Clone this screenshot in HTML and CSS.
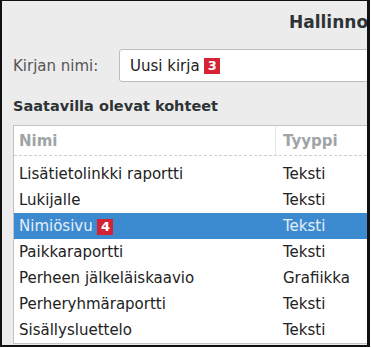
FILE: index.html
```html
<!DOCTYPE html>
<html lang="fi">
<head>
    <meta charset="UTF-8">
    <title>Kirja</title>
    <link rel="stylesheet" href="styles.css">
</head>
<body>
    <div class="frame">
        <div class="dialog">
            <div class="title">Hallinnoi kirjoja</div>
            <div class="name-row">
                <span class="label">Kirjan nimi:</span>
                <div class="entry">Uusi kirja <span class="badge">3</span></div>
            </div>
            <div class="section">Saatavilla olevat kohteet</div>
            <div class="list">
                <div class="list-head">
                    <div class="col-name">Nimi</div>
                    <div class="col-type">Tyyppi</div>
                </div>
                <div class="rows">
                    <div class="row"><div class="col-name">Lisätietolinkki raportti</div><div class="col-type">Teksti</div></div>
                    <div class="row"><div class="col-name">Lukijalle</div><div class="col-type">Teksti</div></div>
                    <div class="row selected"><div class="col-name">Nimiösivu <span class="badge">4</span></div><div class="col-type">Teksti</div></div>
                    <div class="row"><div class="col-name">Paikkaraportti</div><div class="col-type">Teksti</div></div>
                    <div class="row"><div class="col-name">Perheen jälkeläiskaavio</div><div class="col-type">Grafiikka</div></div>
                    <div class="row"><div class="col-name">Perheryhmäraportti</div><div class="col-type">Teksti</div></div>
                    <div class="row"><div class="col-name">Sisällysluettelo</div><div class="col-type">Teksti</div></div>
                </div>
            </div>
        </div>
    </div>
</body>
</html>
```

FILE: styles.css
```css
body {
    margin: 0;
    background: #fff;
    font-family: "DejaVu Sans", sans-serif;
}

.frame {
    box-sizing: border-box;
    width: 370px;
    height: 347px;
    border: 2px solid #111;
    border-top-width: 1px;
    border-right-width: 3px;
    overflow: hidden;
}

.dialog {
    width: 520px;
    height: 100%;
    background: #ececec;
    padding-left: 11px;
}

.title {
    padding-top: 11px;
    padding-left: 276px;
    height: 24px;
    font-size: 17px;
    font-weight: bold;
    color: #2e3436;
    white-space: nowrap;
}

.name-row {
    display: flex;
    align-items: center;
    margin-top: 13px;
}

.label {
    width: 106px;
    font-size: 15px;
    color: #555;
}

.entry {
    box-sizing: border-box;
    flex: 1;
    height: 33px;
    display: flex;
    align-items: center;
    padding-left: 10px;
    background: #fff;
    border: 1px solid #bdbdbd;
    border-radius: 3px;
    font-size: 15px;
    color: #222;
    white-space: pre;
}

.badge {
    display: inline-block;
    width: 16px;
    height: 16px;
    line-height: 16px;
    text-align: center;
    background: #d42335;
    color: #fff;
    font-size: 13px;
    font-weight: bold;
}

.section {
    margin-top: 15px;
    height: 18px;
    line-height: 18px;
    font-size: 14.5px;
    font-weight: bold;
    color: #2e3436;
}

.list {
    margin-top: 10px;
    background: #fff;
    border: 1px solid #c4c4c4;
    font-size: 15px;
}

.list-head {
    display: flex;
    height: 29px;
    align-items: center;
    border-bottom: 1px dashed #d0d0d0;
    color: #a0a4a6;
    font-weight: bold;
}

.list-head .col-type {
    border-left: 1px solid #e6e6e6;
    height: 100%;
    display: flex;
    align-items: center;
    padding-left: 7px;
}

.rows {
    padding-top: 5px;
}

.row {
    display: flex;
    height: 26px;
    align-items: center;
    color: #222;
}

.col-name {
    width: 256px;
    padding-left: 5px;
}

.row .col-type {
    padding-left: 8px;
}

.row.selected {
    background: #3c8bd0;
    color: #e6eef8;
}
```
